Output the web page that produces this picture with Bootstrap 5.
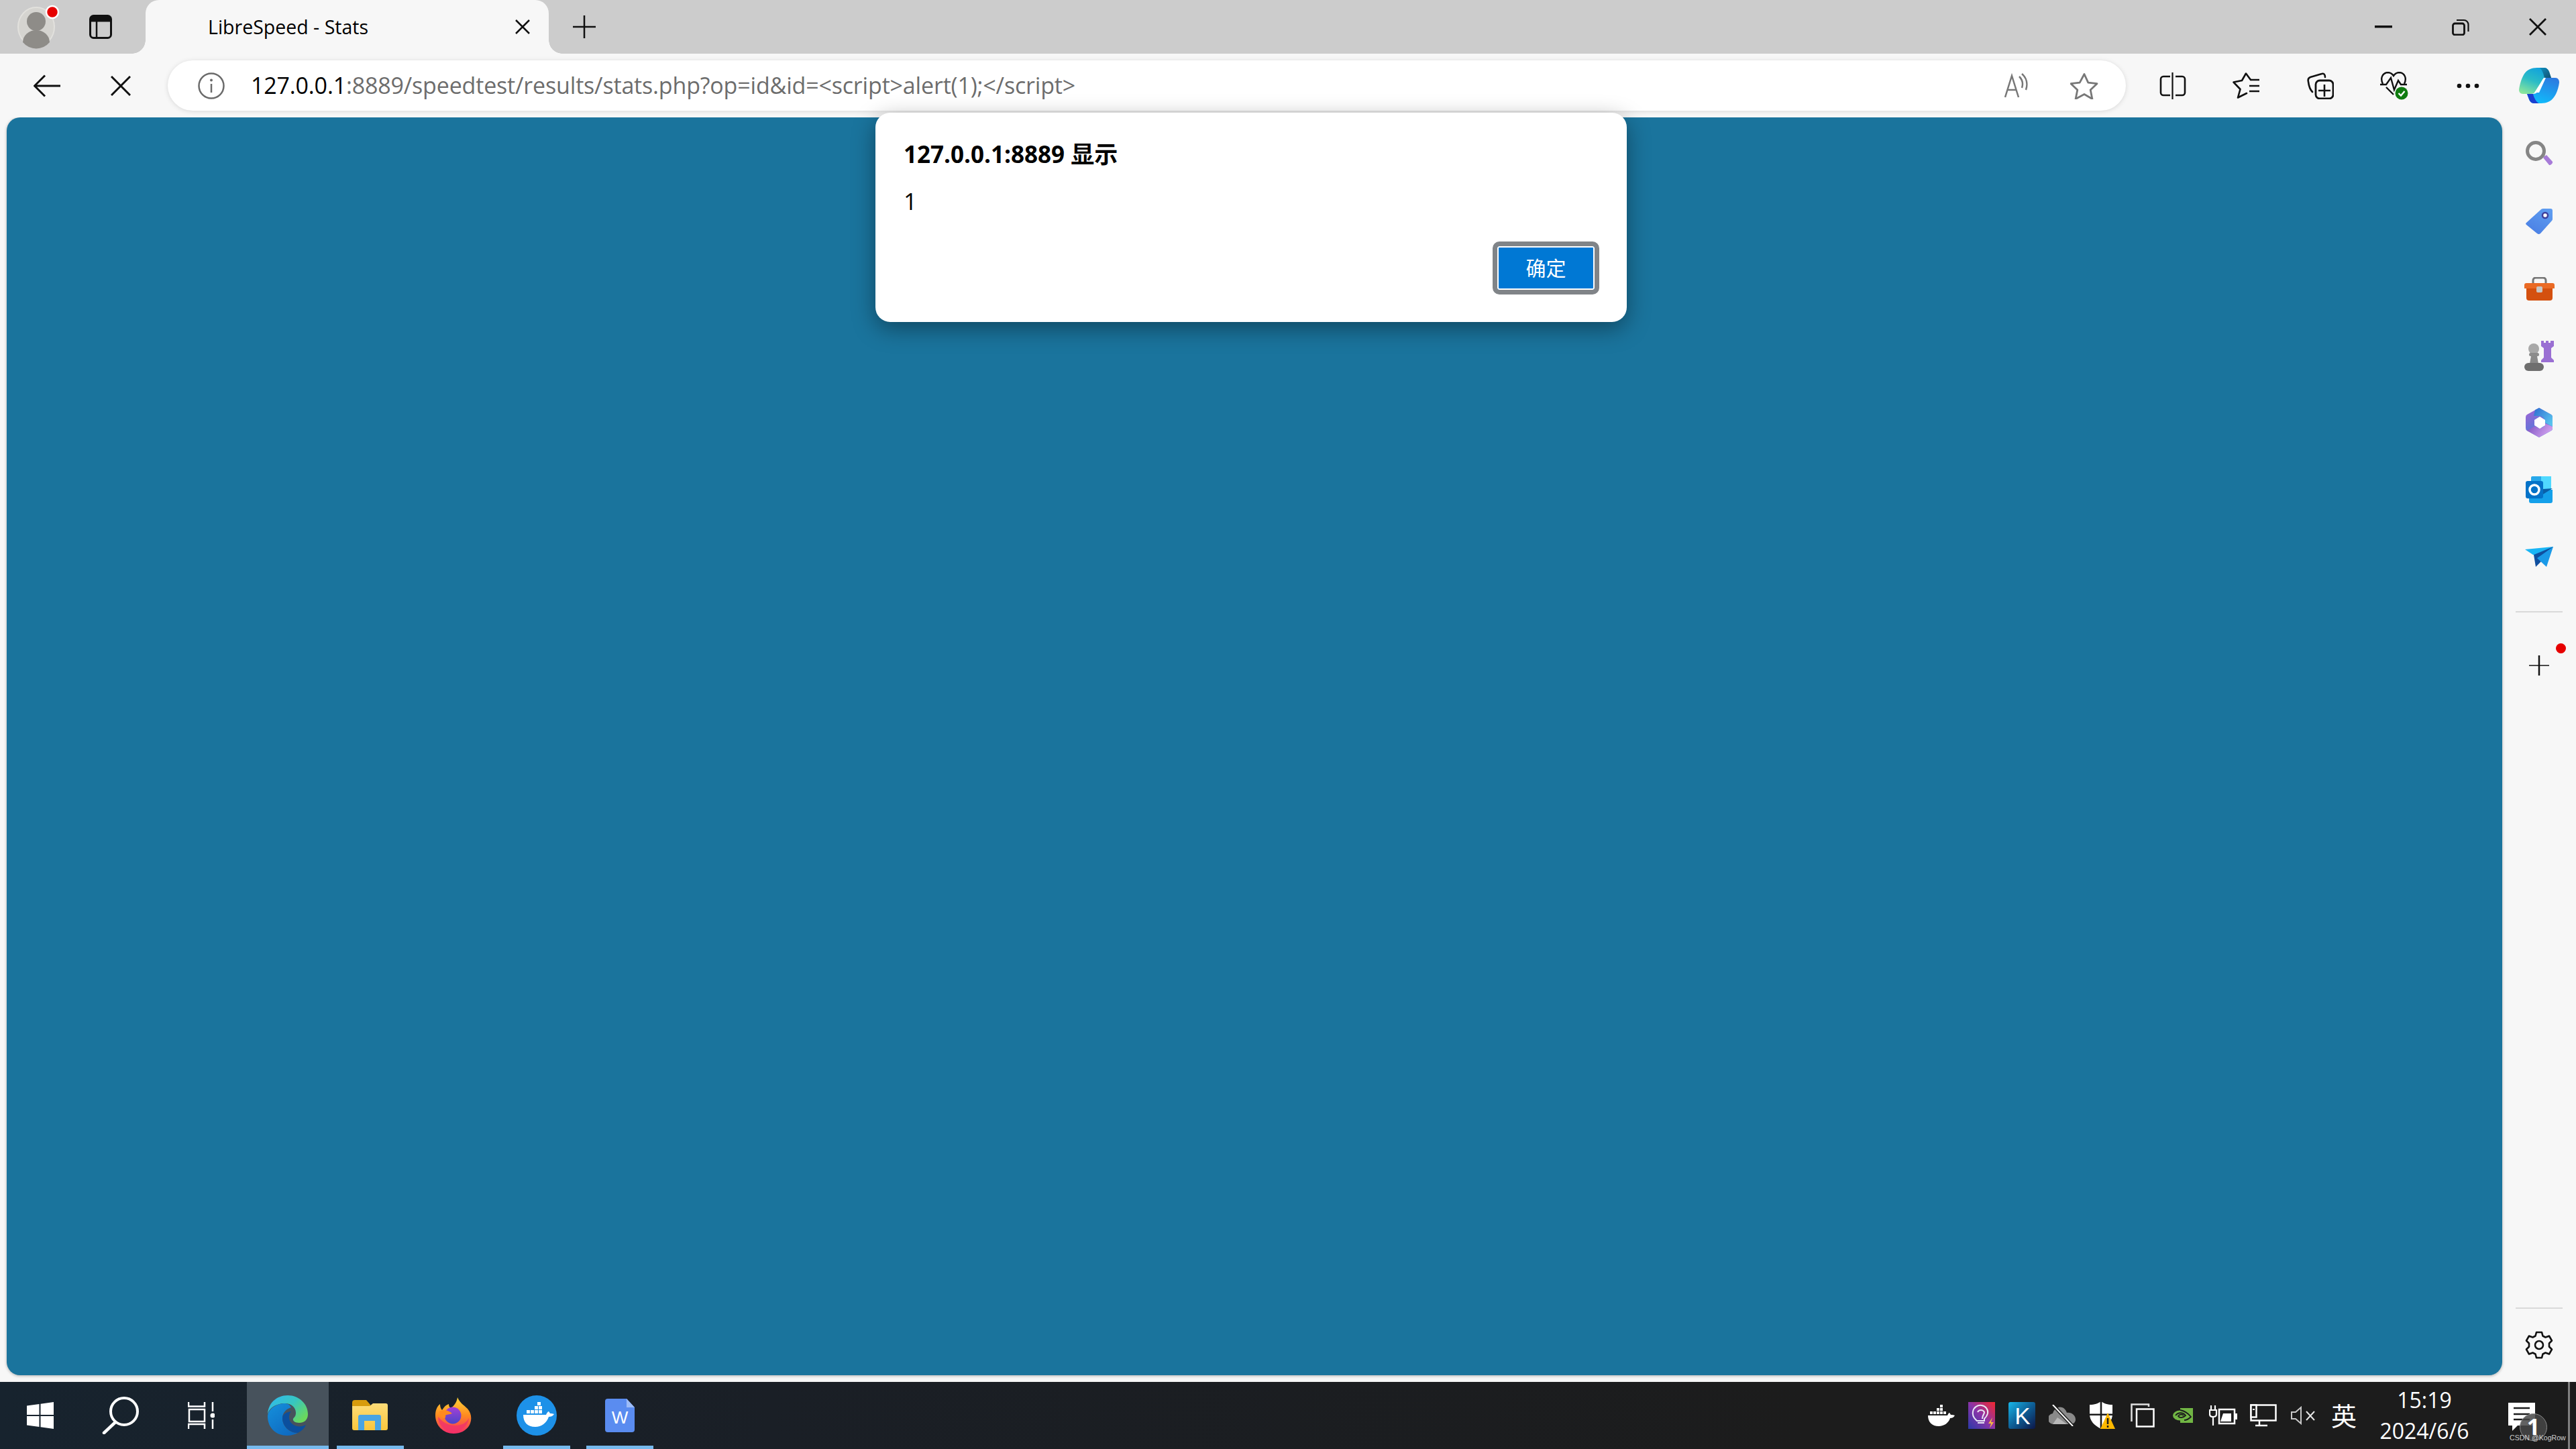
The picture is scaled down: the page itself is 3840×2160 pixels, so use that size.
<!DOCTYPE html>
<html lang="zh-CN">
<head>
<meta charset="utf-8">
<title>LibreSpeed - Stats</title>
<link href="https://cdn.jsdelivr.net/npm/bootstrap@5.3.0/dist/css/bootstrap.min.css" rel="stylesheet">
<style>
html,body{width:3840px;height:2160px;overflow:hidden;margin:0}
body{font-family:"Open Sans","Noto Sans CJK SC",sans-serif;color:#000;background:#f7f7f7}
svg{display:block;flex:none}
.shell{width:3840px;height:2160px}
.tabstrip{height:80px;background:#ccc;flex:none}
.s-profile{width:108px}
.s-actions{width:84px;margin-right:25px}
.s-plus{width:106px}
.s-win{width:115px}
.btab{width:601px;height:80px;background:#f7f7f7;border-radius:20px 20px 0 0;padding:0 28px 0 93px;position:relative;font-size:28.5px}
.btab::before,.btab::after{content:"";position:absolute;bottom:0;width:20px;height:20px}
.btab::before{left:-20px;background:radial-gradient(circle at 0 0,transparent 19.5px,#f7f7f7 20px)}
.btab::after{right:-20px;background:radial-gradient(circle at 100% 0,transparent 19.5px,#f7f7f7 20px)}
.toolbar{height:95px;background:#f7f7f7;flex:none;padding-left:15px;position:relative}
.s-tool{width:110px}
.s-last{width:102px}
.addr{width:2919px;height:75px;margin:0 15px;background:#fff;border-radius:38px;box-shadow:0 1px 7px rgba(0,0,0,.13);padding:0 41px 0 45px}
.url{margin-left:39px;font-size:34px;white-space:nowrap;color:#6d6d6d;letter-spacing:-.17px}
.url b{font-weight:400;color:#000}
.addr-tools{gap:58px}
.stage{min-height:0}
.pagearea{width:3720px;height:1875px;margin-left:10px;background:#1a749d;border-radius:20px;box-shadow:0 1px 4px rgba(0,0,0,.3)}
.sidepanel{width:110px;height:1885px;padding-top:5px}
.s-side{height:100px;flex:none}
.sep{width:70px;height:2px;background:#d9d9d9;flex:none}
.sep-top{margin-top:31px}
.plusbox{margin-top:64px;width:70px;height:30px;position:relative}
.reddot{position:absolute;left:60px;top:-18px;width:15px;height:15px;border-radius:50%;background:#e60000}
.gearbox{margin:33px 0 34px}
.taskbar{height:100px;flex:none;background:linear-gradient(90deg,#17232e 0,#1a1f26 30%,#1c1c1c 70%);color:#fff}
.s-sys{width:120px}
.s-app{width:124px;height:100px;position:relative}
.s-app.on{background:#47525c;width:122px;margin-left:8px}
.s-app.run::after{content:"";position:absolute;left:12px;right:12px;bottom:0;height:5px;background:#76b9ed}
.s-app.on::after{left:0;right:0}
.s-tray{width:60px;height:100px}
.ime{font-size:38px;line-height:1}
.clock{width:180px;font-size:32px;line-height:46px;text-align:center}
.notif{width:108px;height:100px;position:relative}
.notif-ico{margin-top:6px;margin-right:-1px}
.nbadge{position:absolute;left:52px;top:47px;width:41px;height:41px;border-radius:50%;background:rgba(70,70,70,.85);border:1.5px solid #8a8a8a;font-size:34px;line-height:37px;font-weight:700;text-align:center}
.wmark{position:absolute;left:37px;top:76px;font-size:10.6px;line-height:14px;color:#cfcfcf;white-space:nowrap;font-family:"Liberation Sans",sans-serif}
.deskline{width:3px;height:100%;background:#808080;margin:0 9px 0 16px}
.jsdialog{position:absolute;left:1305px;top:168px;width:1120px;height:312px;background:#fff;border-radius:22px;box-shadow:0 10px 34px rgba(0,0,0,.38);padding:37px 41px 41px 42px}
.jstitle{font-size:35px;line-height:50px;font-weight:700}
.jsmsg{font-size:35px;line-height:50px;margin-top:20px}
.jsok{width:159px;height:79px;margin-top:35px;padding:0;font-size:30px;line-height:1;color:#fff;background:#0078d4;border:7px solid #808488;border-radius:10px;box-shadow:inset 0 0 0 2px #fff}
.jsok:hover{color:#fff;background:#0078d4;border-color:#808488}
</style>
</head>
<body>
<div class="shell d-flex flex-column position-relative">

<div class="tabstrip d-flex align-items-center">
  <div class="s-profile d-flex justify-content-center">
    <svg width="70" height="70" viewBox="0 0 70 70"><ellipse cx="35" cy="35" rx="27" ry="29" fill="#d5d4d0" stroke="#e2e1dd" stroke-width="2"/><ellipse cx="35" cy="27" rx="14" ry="14" fill="#8e8c88"/><path d="M15 58a20 18 0 0 1 40 0a27 29 0 0 1-40 0z" fill="#8e8c88"/><circle cx="59" cy="13" r="9" fill="#e60000" stroke="#fff" stroke-width="2.5"/></svg>
  </div>
  <div class="s-actions d-flex justify-content-center">
    <svg width="34" height="36" viewBox="0 0 34 36"><rect x="1.5" y="1.5" width="31" height="33" rx="5" fill="none" stroke="#111" stroke-width="3"/><path d="M1.5 6.5a5 5 0 0 1 5-5h21a5 5 0 0 1 5 5v4h-31z" fill="#111"/><path d="M11 10v25" stroke="#111" stroke-width="2.5"/></svg>
  </div>
  <div class="btab d-flex align-items-center">
    <span class="text-nowrap">LibreSpeed - Stats</span>
    <svg class="ms-auto" width="22" height="22" viewBox="0 0 22 22"><path d="M1 1l20 20M21 1L1 21" stroke="#111" stroke-width="2.5" fill="none"/></svg>
  </div>
  <div class="s-plus d-flex justify-content-center">
    <svg width="34" height="34" viewBox="0 0 34 34"><path d="M17 0v34M0 17h34" stroke="#111" stroke-width="2.5" fill="none"/></svg>
  </div>
  <div class="ms-auto d-flex align-items-center">
    <div class="s-win d-flex justify-content-center"><svg width="26" height="4" viewBox="0 0 26 4"><rect width="26" height="3.5" fill="#111"/></svg></div>
    <div class="s-win d-flex justify-content-center"><svg width="26" height="26" viewBox="0 0 26 26"><rect x="1.5" y="8" width="17" height="17" rx="3" fill="none" stroke="#111" stroke-width="2.8"/><path d="M7 3h11a6.500 6.500 0 0 1 6.500 6.500V20" fill="none" stroke="#111" stroke-width="2.200"/></svg></div>
    <div class="s-win d-flex justify-content-center"><svg width="26" height="26" viewBox="0 0 26 26"><path d="M1 1l24 24M25 1L1 25" stroke="#111" stroke-width="2.8" fill="none"/></svg></div>
  </div>
</div>

<div class="toolbar d-flex align-items-center">
  <div class="s-tool d-flex justify-content-center"><svg width="40" height="34" viewBox="0 0 40 34"><path d="M17 1.5L1.5 17 17 32.5M1.5 17H40" fill="none" stroke="#111" stroke-width="3"/></svg></div>
  <div class="s-tool d-flex justify-content-center"><svg width="30" height="30" viewBox="0 0 30 30"><path d="M1 1l28 28M29 1L1 29" fill="none" stroke="#111" stroke-width="3"/></svg></div>
  <div class="addr d-flex align-items-center">
    <svg width="40" height="40" viewBox="0 0 40 40"><circle cx="20" cy="20" r="18.5" fill="none" stroke="#6b6b6b" stroke-width="2.5"/><circle cx="20" cy="11.5" r="2" fill="#6b6b6b"/><path d="M20 17v13" stroke="#6b6b6b" stroke-width="2.5"/></svg>
    <span class="url"><b>127.0.0.1</b>:8889/speedtest/results/stats.php?op=id&amp;id=&lt;script&gt;alert(1);&lt;/script&gt;</span>
    <div class="ms-auto d-flex align-items-center addr-tools">
      <svg width="40" height="38" viewBox="0 0 40 38"><path d="M1 36L11 4l10 32M4.5 25h13M22 5c5 5 6 11 4 17M26 1c7 6 9 15 6 24" fill="none" stroke="#777" stroke-width="2.5"/></svg>
      <svg width="42" height="40" viewBox="0 0 42 40"><path d="M21 2.5l5.800 12.700 13.200 1.500-9.800 9.300 2.700 13.500L21 32.500 8.100 39.500l2.700-13.500L1 16.700l13.200-1.500z" fill="none" stroke="#777" stroke-width="2.8" stroke-linejoin="round"/></svg>
    </div>
  </div>
  <div class="s-tool d-flex justify-content-center"><svg width="40" height="40" viewBox="0 0 40 40"><path d="M16 6H6a4 4 0 0 0-4 4v20a4 4 0 0 0 4 4h10M24 6h10a4 4 0 0 1 4 4v20a4 4 0 0 1-4 4H24" fill="none" stroke="#111" stroke-width="2.6"/><path d="M19.5 0v40" stroke="#111" stroke-width="2.2"/></svg></div>
  <div class="s-tool d-flex justify-content-center"><svg width="42" height="40" viewBox="0 0 42 40"><path d="M27 11L20 1.5 14 12 1.5 14.500 11.500 25 8 37.500 21 31" fill="none" stroke="#111" stroke-width="2.6" stroke-linejoin="round" stroke-linecap="round"/><path d="M27 11h13M25 20h15M25 28h15" stroke="#111" stroke-width="2.6"/></svg></div>
  <div class="s-tool d-flex justify-content-center"><svg width="40" height="40" viewBox="0 0 40 40"><path d="M8 29C5 26 3 22 2 14c-1-4 0-6 3-7L22 2c3-1 5 1 5 5" fill="none" stroke="#111" stroke-width="2.6" stroke-linecap="round"/><rect x="13" y="12" width="26" height="27" rx="6" fill="#f7f7f7" stroke="#111" stroke-width="2.8"/><path d="M26 18v18M17 27h18" stroke="#111" stroke-width="2.6"/></svg></div>
  <div class="s-tool d-flex justify-content-center"><svg width="42" height="42" viewBox="0 0 42 42"><path d="M4 18C0 10 3 2 11 1c4 0 7 2 9 5 2-3 5-5 9-5 8 1 11 9 7 17" fill="none" stroke="#111" stroke-width="2.4"/><path d="M0 19h9l7-10 5 18 6-14 4 6h9M9 23l11 11" fill="none" stroke="#111" stroke-width="2.4"/><circle cx="32" cy="32" r="9.500" fill="#107c10"/><path d="M27.500 32l3.500 3.500 5.500-6.500" fill="none" stroke="#fff" stroke-width="2.400"/></svg></div>
  <div class="s-tool d-flex justify-content-center"><svg width="34" height="8" viewBox="0 0 34 8"><circle cx="4" cy="4" r="3.3" fill="#111"/><circle cx="17" cy="4" r="3.3" fill="#111"/><circle cx="30" cy="4" r="3.3" fill="#111"/></svg></div>
  <div class="s-last d-flex justify-content-center">
    <svg width="60" height="53" viewBox="0 0 60 53"><defs><linearGradient id="cpa" x1=".7" y1="0" x2=".2" y2="1"><stop offset="0" stop-color="#10a0de"/><stop offset=".5" stop-color="#2bbcc6"/><stop offset="1" stop-color="#8be69c"/></linearGradient><linearGradient id="cpb" x1=".8" y1="0" x2=".35" y2="1"><stop offset="0" stop-color="#2d79df"/><stop offset="1" stop-color="#0fbdfc"/></linearGradient><linearGradient id="cpc" x1="0" y1="0" x2="1" y2="1"><stop offset="0" stop-color="#0e8fc0"/><stop offset="1" stop-color="#14506f"/></linearGradient></defs>
      <path d="M27 0h11c3 0 6 3 7 6l3 9h-9c-2 0-3 1-4 3L26 34c-2 3-5 5-9 5H6c-4 0-6-3-6-6 1-8 4-18 8-24C12 3 19 0 27 0z" fill="url(#cpa)"/>
      <path d="M30 0h8c3 0 6 3 7 6l3 9H38c-1-5-4-14-8-15z" fill="url(#cpc)"/>
      <path d="M38 15h16c4 0 6 3 6 7-1 8-4 17-8 22-4 6-11 9-19 9H22c-3 0-6-3-7-6l-3-8h9c3 0 5-1 7-4l8-16c1-2 1-4 2-4z" fill="url(#cpb)"/>
      <path d="M15 47l-3-8h9c1 5 5 13 9 14h-8c-3 0-6-3-7-6z" fill="#1b3fd0"/>
      <path d="M37 15h3l-10 22h-7z" fill="#fff"/>
    </svg>
  </div>
</div>

<div class="stage d-flex flex-grow-1">
  <div class="pagearea flex-none"></div>
  <div class="sidepanel d-flex flex-column align-items-center">
    <div class="s-side d-flex align-items-center justify-content-center"><svg width="42" height="40" viewBox="0 0 42 40"><circle cx="16" cy="15" r="12.5" fill="none" stroke="#858585" stroke-width="5"/><path d="M27 25l3-3 1 1z" fill="#777"/><path d="M27 25l5-4 9 10c1 2-3 6-5 5z" fill="#a77bd8"/></svg></div>
    <div class="s-side d-flex align-items-center justify-content-center"><svg width="40" height="40" viewBox="0 0 40 40"><defs><linearGradient id="tg" x1=".8" y1="0" x2=".2" y2="1"><stop offset="0" stop-color="#5e9cf0"/><stop offset="1" stop-color="#4a7fe4"/></linearGradient></defs><path d="M26 1h11a3 3 0 0 1 3 3v12a4 4 0 0 1-1 3L22 38a4 4 0 0 1-5 0L1 25a2 2 0 0 1 0-3L22 3a6 6 0 0 1 4-2z" fill="url(#tg)"/><circle cx="29" cy="11" r="4" fill="#fff" stroke="#3e3f9c" stroke-width="2.5"/></svg></div>
    <div class="s-side d-flex align-items-center justify-content-center"><svg width="45" height="35" viewBox="0 0 45 35"><path d="M13 10V5a4 4 0 0 1 4-4h11a4 4 0 0 1 4 4v5" fill="none" stroke="#777" stroke-width="3"/><path d="M3 9h39a3 3 0 0 1 3 3v5H0v-5a3 3 0 0 1 3-3z" fill="#ea6a24"/><path d="M3 17h39v14a4 4 0 0 1-4 4H7a4 4 0 0 1-4-4z" fill="#d4500f"/><rect x="18" y="14" width="9" height="9" rx="2" fill="#c8c6c4"/></svg></div>
    <div class="s-side d-flex align-items-center justify-content-center"><svg width="45" height="45" viewBox="0 0 45 45"><path d="M25 0h4v3h3V0h4v3h3V0h5v8l-4 3v14l4 4v3H25v-3l4-4V11l-4-3z" fill="#9a6fd3"/><circle cx="14" cy="12" r="8" fill="#a8a8a8"/><rect x="7" y="18" width="15" height="5" rx="2.5" fill="#8c8c8c"/><path d="M10 23h9l2 11H8z" fill="#8a8a8a"/><rect y="33" width="29" height="12" rx="6" fill="#6e6e6e"/></svg></div>
    <div class="s-side d-flex align-items-center justify-content-center"><svg width="40" height="44" viewBox="0 0 40 44"><defs><linearGradient id="m1" x1="0" y1="0" x2=".6" y2="1"><stop offset="0" stop-color="#a763d4"/><stop offset="1" stop-color="#3a7fdc"/></linearGradient><linearGradient id="m2" x1="0" y1="0" x2="1" y2=".7"><stop offset="0" stop-color="#2f6cd0"/><stop offset="1" stop-color="#59c2ee"/></linearGradient><linearGradient id="m3" x1="0" y1="0" x2="1" y2=".4"><stop offset="0" stop-color="#7a4fbf"/><stop offset="1" stop-color="#cfa0ee"/></linearGradient></defs><path d="M20 0l18 10q2 1 2 4v16q0 3-2 4L20 44 2 34q-2-1-2-4V14q0-3 2-4z" fill="url(#m1)"/><path d="M14 3l6-3 18 10q2 1 2 4v14l-11-6c0-6-4-10-9-10h-8z" fill="url(#m2)"/><path d="M2 34l12-7c2 2 4 3 7 3 5 0 8-3 8-7l11 5v2q0 3-2 4L20 44z" fill="url(#m3)"/><path d="M21 13l8 5v8l-8 5-8-5v-8z" fill="#fff"/></svg></div>
    <div class="s-side d-flex align-items-center justify-content-center"><svg width="40" height="40" viewBox="0 0 40 40"><rect x="8" y="0" width="30" height="24" rx="2" fill="#28a8ea"/><rect x="23" y="0" width="15" height="20" fill="#50d9ff"/><path d="M5 20h35v17a3 3 0 0 1-3 3H8a3 3 0 0 1-3-3z" fill="#14a0ea"/><path d="M40 18L24 28 12 22v-2z" fill="#0a5fa8"/><rect y="7" width="26" height="26" rx="3" fill="#0472c8"/><circle cx="13" cy="20" r="7" fill="none" stroke="#fff" stroke-width="3.5"/></svg></div>
    <div class="s-side d-flex align-items-center justify-content-center"><svg width="42" height="30" viewBox="0 0 42 30"><path d="M0 4L42 0 30 13 12 12z" fill="#19b5f5"/><path d="M42 0L13 12l3 18 7-7z" fill="#0f4f9f"/><path d="M42 0L18 17l14 13z" fill="#1a9ae8"/></svg></div>
    <div class="sep sep-top"></div>
    <div class="plusbox d-flex justify-content-center"><span class="reddot"></span><svg width="30" height="30" viewBox="0 0 30 30"><path d="M15 0v30" stroke="#111" stroke-width="2.5"/><path d="M0 15h30" stroke="#111" stroke-width="1.5"/></svg></div>
    <div class="sep mt-auto"></div>
    <div class="gearbox"><svg width="42" height="42" viewBox="0 0 42 42"><path d="M17 2h8l1.500 5.500 4 2L36 7.500l4 7-4 4v5l4 4-4 7-5.500-2-4 2L25 40h-8l-1.500-5.500-4-2L6 34.500l-4-7 4-4v-5l-4-4 4-7 5.500 2 4-2z" fill="none" stroke="#111" stroke-width="2.6" stroke-linejoin="round"/><circle cx="21" cy="21" r="6" fill="none" stroke="#111" stroke-width="2.6"/></svg></div>
  </div>
</div>

<div class="taskbar d-flex align-items-center">
  <div class="s-sys d-flex justify-content-center"><svg width="40" height="40" viewBox="0 0 40 40"><path d="M0 5.500L18.500 3v16H0zM20.500 2.700L40 0v19H20.500zM0 21h18.500v16L0 34.500zM20.500 21H40v19l-19.500-2.700z" fill="#fff"/></svg></div>
  <div class="s-sys d-flex justify-content-center"><svg width="56" height="56" viewBox="0 0 56 56"><circle cx="33" cy="22" r="20" fill="none" stroke="#fff" stroke-width="4"/><path d="M20 38L3 54" stroke="#fff" stroke-width="4.5" stroke-linecap="round"/></svg></div>
  <div class="s-sys d-flex justify-content-center"><svg width="40" height="40" viewBox="0 0 40 40"><path d="M1 0v6.500h24V0M1 40v-7h24v7M37 0v14M37 26v14" fill="none" stroke="#fff" stroke-width="2.5"/><rect x="2" y="11" width="23" height="18" fill="none" stroke="#fff" stroke-width="2.5"/><circle cx="37" cy="20" r="3.5" fill="#fff"/></svg></div>
  <div class="s-app on run d-flex align-items-center justify-content-center">
    <svg width="62" height="60" viewBox="0 0 62 60"><defs><linearGradient id="ed1" x1="0" y1="0" x2="1" y2=".7"><stop offset="0" stop-color="#2fb8f4"/><stop offset=".55" stop-color="#37c6c0"/><stop offset="1" stop-color="#6bd95c"/></linearGradient><linearGradient id="ed2" x1="0" y1="0" x2=".7" y2="1"><stop offset="0" stop-color="#1590dc"/><stop offset="1" stop-color="#0e6ac0"/></linearGradient></defs>
      <path d="M1 30C1 12 14 0 31 0c17 0 30 13 30 28 0 9-6 13-13 13-6 0-10-3-9-6 1-2 4-3 4-9 0-8-7-14-16-14C13 12 1 20 1 30z" fill="url(#ed1)"/>
      <path d="M27 12C13 12 2 21 1 31c0 18 13 29 29 29 6 0 12-2 16-4-14 0-23-11-23-22 0-8 6-14 13-16-2-4-5-6-9-6z" fill="url(#ed2)"/>
      <path d="M23 34c0 11 10 22 23 22 6-3 10-7 12-12-8 4-17 3-22-3-5-6-3-14 0-17-7 1-13 4-13 10z" fill="#0b4f9e"/>
    </svg>
  </div>
  <div class="s-app run d-flex align-items-center justify-content-center">
    <svg width="54" height="46" viewBox="0 0 54 46"><defs><linearGradient id="fd" x1="0" y1="0" x2="0" y2="1"><stop offset="0" stop-color="#fddc78"/><stop offset="1" stop-color="#f9c63c"/></linearGradient></defs><path d="M0 4a4 4 0 0 1 4-4h17l6 7v8H0z" fill="#d79b0c"/><path d="M0 9h26l5-4h19a3 3 0 0 1 3 3v34a3 3 0 0 1-3 3H3a3 3 0 0 1-3-3z" fill="url(#fd)"/><path d="M9 45V25a3 3 0 0 1 3-3h28a3 3 0 0 1 3 3v20h-9V31H18v14z" fill="#49a4e4"/></svg>
  </div>
  <div class="s-app d-flex align-items-center justify-content-center">
    <svg width="54" height="54" viewBox="0 0 54 54"><defs><linearGradient id="ff1" x1=".5" y1="0" x2=".5" y2="1"><stop offset="0" stop-color="#ffd43a"/><stop offset=".5" stop-color="#ff8a1f"/><stop offset="1" stop-color="#f52a6a"/></linearGradient><linearGradient id="ff2" x1=".5" y1="0" x2=".5" y2="1"><stop offset="0" stop-color="#a53fd6"/><stop offset="1" stop-color="#4a45c8"/></linearGradient></defs>
      <path d="M33 0c3 8 10 12 15 17 7 8 6 18 3 24-5 9-14 13-24 13C12 54 0 42 0 27c0-7 2-13 7-17 0 4 1 7 3 9 3-5 6-8 10-9 0 3 1 5 3 6 6-4 9-10 10-16z" fill="url(#ff1)"/>
      <path d="M4 29c0 12 10 22 23 22s22-10 23-20c-4 7-10 11-20 11C18 42 10 36 4 29z" fill="#f0336a" opacity=".8"/>
      <circle cx="26" cy="27" r="12.5" fill="url(#ff2)"/><path d="M6 21c6-3 14-2 19 3-4 2-8 1-10 3 1 3-1 5-3 4-3-2-6-6-6-10z" fill="#ff8a1f"/>
    </svg>
  </div>
  <div class="s-app run d-flex align-items-center justify-content-center">
    <svg width="60" height="60" viewBox="0 0 60 60"><circle cx="30" cy="30" r="30" fill="#1d91e8"/><path d="M10 29h34c1-3 3-5 4-5 1 1 2 3 2 3 2 0 4 0 6 1-2 3-5 4-8 4-3 9-11 15-20 15-12 0-18-7-18-18z" fill="#fff"/><g fill="#fff"><rect x="15" y="22" width="5" height="5"/><rect x="21" y="22" width="5" height="5"/><rect x="27" y="22" width="5" height="5"/><rect x="33" y="22" width="5" height="5"/><rect x="27" y="16" width="5" height="5"/><rect x="33" y="16" width="5" height="5"/><rect x="31" y="10" width="5" height="5"/></g></svg>
  </div>
  <div class="s-app run d-flex align-items-center justify-content-center">
    <svg width="44" height="50" viewBox="0 0 44 50"><path d="M4 0h28l12 13v33a4 4 0 0 1-4 4H4a4 4 0 0 1-4-4V4a4 4 0 0 1 4-4z" fill="#5a8cf0"/><path d="M32 0l12 13H32z" fill="#9dbcf7"/><text x="22" y="37" text-anchor="middle" font-family="Liberation Sans,sans-serif" font-size="26" fill="#fff">W</text></svg>
  </div>

  <div class="ms-auto d-flex align-items-center h-100">
    <div class="s-tray d-flex align-items-center justify-content-center"><svg width="40" height="32" viewBox="0 0 40 32"><path d="M0 16h29c1-2 2-4 3-4 1 1 2 3 2 3 2 0 4 0 6 1-2 3-4 4-7 4-2 7-9 12-17 12C6 32 0 26 0 16z" fill="#fff"/><g fill="#fff"><rect x="3" y="10" width="4" height="4"/><rect x="8" y="10" width="4" height="4"/><rect x="13" y="10" width="4" height="4"/><rect x="18" y="10" width="4" height="4"/><rect x="23" y="10" width="4" height="4"/><rect x="13" y="5" width="4" height="4"/><rect x="18" y="5" width="4" height="4"/><rect x="18" y="0" width="4" height="4"/></g></svg></div>
    <div class="s-tray d-flex align-items-center justify-content-center"><svg width="40" height="40" viewBox="0 0 40 40"><defs><linearGradient id="ap" x1="1" y1="0" x2="0" y2="1"><stop offset="0" stop-color="#f5282e"/><stop offset=".5" stop-color="#8a34a8"/><stop offset="1" stop-color="#2a3aa8"/></linearGradient></defs><rect width="40" height="40" fill="url(#ap)"/><path d="M11 26c-3-3-5-7-4-12 1-6 7-10 13-9 6 1 10 6 9 12-1 4-3 6-5 8v3H13z" fill="none" stroke="#e8e8f5" stroke-width="2"/><path d="M14 15c2-4 8-4 10 0 0 4-3 4-3 10M14 31h10" fill="none" stroke="#e8e8f5" stroke-width="2"/><path d="M36 23l-6 9h4l-2 7 6-9h-4z" fill="#f4b942"/></svg></div>
    <div class="s-tray d-flex align-items-center justify-content-center"><svg width="40" height="40" viewBox="0 0 40 40"><defs><linearGradient id="kg" x1="0" y1="0" x2="1" y2="1"><stop offset="0" stop-color="#18b7ea"/><stop offset=".5" stop-color="#0e5f96"/><stop offset="1" stop-color="#0c1648"/></linearGradient></defs><rect width="40" height="40" rx="3" fill="url(#kg)"/><text x="21" y="33" text-anchor="middle" font-family="Liberation Sans,sans-serif" font-size="35" fill="#fff">K</text></svg></div>
    <div class="s-tray d-flex align-items-center justify-content-center"><svg width="40" height="32" viewBox="0 0 40 32"><path d="M8 29a8 8 0 0 1-2-16c2-7 8-11 14-9 3 1 6 4 7 8 7-1 13 4 13 10 0 4-3 7-7 7z" fill="#8a8a8a"/><path d="M6 29l7-10 14 10z" fill="#b8b8b8"/><path d="M6 0l30 32" stroke="#1c1c1c" stroke-width="5"/><path d="M6 0l30 32" stroke="#fff" stroke-width="2"/></svg></div>
    <div class="s-tray d-flex align-items-center justify-content-center"><svg width="40" height="42" viewBox="0 0 40 42"><path d="M18 0c4 3 10 5 17 5v14c0 10-7 17-17 22C8 36 1 29 1 19V5c7 0 13-2 17-5z" fill="#fff"/><path d="M16.700 0h2.600v40h-2.600zM1 18.500h35v2.600H1z" fill="#1c1c1c"/><path d="M28 17l11 24H17z" fill="#ffb900"/><path d="M28 25v9M28 36v3" stroke="#1c1c1c" stroke-width="2.5"/></svg></div>
    <div class="s-tray d-flex align-items-center justify-content-center"><svg width="36" height="36" viewBox="0 0 36 36"><path d="M1.500 27V1.500H27V5" fill="none" stroke="#e0e0e0" stroke-width="2.5"/><rect x="9" y="8.500" width="25.500" height="26" fill="none" stroke="#fff" stroke-width="2.5"/></svg></div>
    <div class="s-tray d-flex align-items-center justify-content-center"><svg width="30" height="22" viewBox="0 0 30 22"><rect x="11" width="19" height="22" fill="#71b644"/><ellipse cx="11" cy="11" rx="11" ry="7.500" fill="#71b644"/><path d="M4 11c4-5 11-5 15 0-4 4-9 4-11 1 2-3 6-3 8-1" fill="none" stroke="#1c1c1c" stroke-width="1.800"/><path d="M11 3c6 1 12 5 16 10-3 3-7 5-10 5" fill="none" stroke="#1c1c1c" stroke-width="1.800"/></svg></div>
    <div class="s-tray d-flex align-items-center justify-content-center"><svg width="42" height="30" viewBox="0 0 42 30"><path d="M3 0v7M9 0v7M1 7h10v6c0 3-2 4-5 4s-5-1-5-4zM6 17v13" fill="none" stroke="#fff" stroke-width="2.200"/><rect x="15" y="6" width="23" height="21" fill="none" stroke="#fff" stroke-width="2.5"/><path d="M17 24l4-12 h12v12z" fill="#fff"/><rect x="38" y="12" width="4" height="9" fill="#fff"/></svg></div>
    <div class="s-tray d-flex align-items-center justify-content-center"><svg width="40" height="34" viewBox="0 0 40 34"><rect x="1.5" y="1.5" width="37" height="23" fill="none" stroke="#fff" stroke-width="2.5"/><path d="M14 25v6M8 32h18" stroke="#fff" stroke-width="2.5"/><rect x="1.5" y="1.5" width="8" height="18" fill="#1c1c1c" stroke="#fff" stroke-width="2.5"/><path d="M4 8h3" stroke="#fff" stroke-width="2"/></svg></div>
    <div class="s-tray d-flex align-items-center justify-content-center"><svg width="38" height="28" viewBox="0 0 38 28"><path d="M1 9h6l8-7v24l-8-7H1z" fill="none" stroke="#c8c8c8" stroke-width="2"/><path d="M23 8l12 13M35 8L23 21" stroke="#e6e6e6" stroke-width="2"/></svg></div>
    <div class="s-tray d-flex align-items-center justify-content-center ime">英</div>
    <div class="clock"><div>15:19</div><div>2024/6/6</div></div>
    <div class="notif d-flex align-items-center justify-content-center">
      <svg class="notif-ico" width="40" height="44" viewBox="0 0 40 44"><path d="M0 0h40v34H14l-8 8v-8H0z" fill="#fff"/><path d="M8 8h24M8 17h24M8 25h24" stroke="#1c1c1c" stroke-width="2.5"/></svg>
      <span class="nbadge">1</span>
      <span class="wmark">CSDN @KogRow</span>
    </div>
    <div class="deskline"></div>
  </div>
</div>

<div class="jsdialog d-flex flex-column" role="dialog">
  <div class="jstitle">127.0.0.1:8889 显示</div>
  <div class="jsmsg">1</div>
  <div class="d-flex justify-content-end"><button type="button" class="btn jsok">确定</button></div>
</div>

</div>
<script src="https://cdn.jsdelivr.net/npm/bootstrap@5.3.0/dist/js/bootstrap.bundle.min.js"></script>
</body>
</html>
